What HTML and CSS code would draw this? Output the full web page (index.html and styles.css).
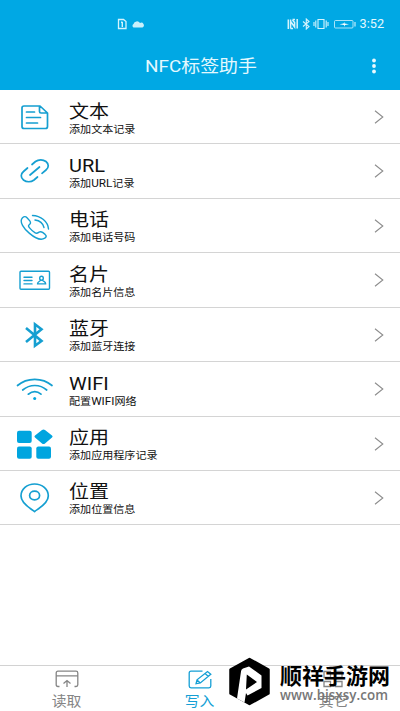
FILE: index.html
```html
<!DOCTYPE html>
<html lang="zh-CN">
<head>
<meta charset="utf-8">
<title>NFC标签助手</title>
<link rel="stylesheet" href="styles.css">
</head>
<body>
<div class="app">
  <header class="header">
    <div class="status">
      <svg class="status-left" width="28" height="12" viewBox="0 0 28 12"><path d="M1.500 1.500h5l2.500 2v7h-7.500z" fill="none" stroke="#d5f4fd" stroke-width="1.300"/><path d="M5.300 4v5M4 4.300h1.500" stroke="#d5f4fd" stroke-width="1.400"/><path d="M16.500 9.500a2 2 0 0 1 0-3.500a3.600 3.600 0 0 1 6.500-1a2.300 2.300 0 0 1 2.500 4.500z" fill="#c9f0fb"/></svg>
      <svg class="status-right" width="70" height="12" viewBox="0 0 70 12"><g fill="none" stroke="#d5f4fd" stroke-width="1.100"><path d="M1.300 1.500v9.500M3.600 1.500v9M3.600 3.500l4 5.500V4.500L5.500 2M5.500 1.500h2.500M3.500 10.500h2.500M10.200 1v9.500" stroke-width="1.500"/><path d="M16 3.500l6 5-2.700 2.500V1L22 3.500l-6 5"/><path d="M31 1.500h6v9h-6zM28.800 2.500v7M39.200 2.500v7M27 4v4M41 4v4"/><rect x="47.500" y="2.500" width="18.500" height="7.500" rx="1" stroke-width=".8"/><path d="M68 4v4.500"/></g><path d="M52.500 6.300l4-.8 1-1.500v1.500l4.500.7-4 .8-1 1.700V7z" fill="#fff"/></svg>
      <span class="time">3:52</span>
    </div>
    <div class="bar">
      <h1>NFC标签助手</h1>
      <svg class="more" width="6" height="16" viewBox="0 0 6 16" fill="#e9f9fe"><circle cx="3" cy="2.500" r="1.900"/><circle cx="3" cy="8" r="1.900"/><circle cx="3" cy="13.500" r="1.900"/></svg>
    </div>
  </header>
  <main class="list">
    <div class="row">
      <svg class="icon" viewBox="0 0 60 54"><path d="M24 16h16l7.500 7v13.500a2 2 0 0 1-2 2H24a2 2 0 0 1-2-2V18a2 2 0 0 1 2-2zM39.500 16v5.500q0 1.500 1.500 1.500h6.500M26.500 22h8M26.500 27.500h14M26.500 33h11"/></svg>
      <div class="text"><div class="name">文本</div><div class="sub">添加文本记录</div></div>
      <svg class="arrow" viewBox="0 0 10 14"><path d="M1 .7l7.800 6.300L1 13.300"/></svg>
    </div>
    <div class="row">
      <svg class="icon" viewBox="0 0 60 54"><path d="M32 20.500l3.500-3c3-2.300 7.500-2.300 10.500 0c3 2.500 3 6 0 8.500L42 29.300M27.500 24l-4 3.500c-3 2.500-3 6 0 8.500c3 2.300 7.500 2.300 10.500 0l3.500-3M30 31l9.500-8"/></svg>
      <div class="text"><div class="name">URL</div><div class="sub">添加<span class="latin">URL</span>记录</div></div>
      <svg class="arrow" viewBox="0 0 10 14"><path d="M1 .7l7.800 6.300L1 13.300"/></svg>
    </div>
    <div class="row">
      <svg class="icon thin" viewBox="0 0 60 54"><path d="M22.500 18.800c1.600-1.500 3.200-1.500 4.500-.1l2.800 3.200c1.200 1.600.8 2.800-.6 3.800-1.300 1-.7 2 .8 3.700 1.600 1.900 3.300 3.400 5.200 4.500 1.600 1 2.500.2 3.700-.7 1.200-.8 2.500-.6 3.700.2l2.500 2c1.700 1.500 1.300 2.700-.3 3.800-4 2.600-9.600 0-15.300-4.800-5.500-4.600-10.800-11.700-7-15.600zM32.500 16.500c8.200.2 15.500 6.200 16 13.500M35 21c4.800.6 8 3.500 9 7.500"/></svg>
      <div class="text"><div class="name">电话</div><div class="sub">添加电话号码</div></div>
      <svg class="arrow" viewBox="0 0 10 14"><path d="M1 .7l7.800 6.300L1 13.300"/></svg>
    </div>
    <div class="row">
      <svg class="icon thin" viewBox="0 0 60 54"><rect x="20" y="18.300" width="29.500" height="18" rx="1"/><path d="M24 24.300h8M24 27.500h8M24 30.900h8"/><ellipse cx="41.500" cy="25.200" rx="1.800" ry="2"/><path d="M40.500 27.200c0 1.200-3 1-3 3.700h8.200c0-2.700-3.200-2.500-3.200-3.700"/></svg>
      <div class="text"><div class="name">名片</div><div class="sub">添加名片信息</div></div>
      <svg class="arrow" viewBox="0 0 10 14"><path d="M1 .7l7.800 6.300L1 13.300"/></svg>
    </div>
    <div class="row">
      <svg class="icon bold" viewBox="0 0 60 54"><path d="M26 20l15.500 13-6.500 4.700V16.300l6.500 5L26 34"/></svg>
      <div class="text"><div class="name">蓝牙</div><div class="sub">添加蓝牙连接</div></div>
      <svg class="arrow" viewBox="0 0 10 14"><path d="M1 .7l7.800 6.300L1 13.300"/></svg>
    </div>
    <div class="row">
      <svg class="icon" viewBox="0 0 60 54"><path d="M17.500 23.500c9.500-8.300 25-8.300 34.500 0M22.700 28c7-6 17.300-6 24 0M28.300 32.200c4-3 9-3 12.700 0"/><circle class="fill" cx="34.700" cy="36.500" r="1.500"/></svg>
      <div class="text"><div class="name">WIFI</div><div class="sub">配置<span class="latin">WIFI</span>网络</div></div>
      <svg class="arrow" viewBox="0 0 10 14"><path d="M1 .7l7.800 6.300L1 13.300"/></svg>
    </div>
    <div class="row">
      <svg class="icon" viewBox="0 0 60 54"><g class="fill"><rect x="17" y="13.800" width="14.700" height="12.200" rx="2"/><rect x="17" y="29.600" width="14.700" height="12.200" rx="2"/><rect x="36.300" y="29.600" width="14.700" height="12.200" rx="2"/><path d="M42 13q1.500-1.100 3 0l7 5.500q1.300 1 0 2L45 26.400q-1.500 1.100-3 0l-7-5.900q-1.200-1 0-2z"/></g></svg>
      <div class="text"><div class="name">应用</div><div class="sub">添加应用程序记录</div></div>
      <svg class="arrow" viewBox="0 0 10 14"><path d="M1 .7l7.800 6.300L1 13.300"/></svg>
    </div>
    <div class="row">
      <svg class="icon" viewBox="0 0 60 54"><path d="M34.600 40.500c-3-2.500-13.600-7.500-13.600-15.500 0-6.800 6-12 13.600-12s13.700 5.200 13.700 12c0 8-10.700 13-13.700 15.500z"/><ellipse cx="34.600" cy="24.500" rx="5" ry="4.300"/></svg>
      <div class="text"><div class="name">位置</div><div class="sub">添加位置信息</div></div>
      <svg class="arrow" viewBox="0 0 10 14"><path d="M1 .7l7.800 6.300L1 13.300"/></svg>
    </div>
  </main>
  <nav class="tabs">
    <div class="tab"><svg width="26" height="20" viewBox="0 0 26 20"><path d="M5.500 16.500H4q-1.800 0-1.800-1.800V3q0-1.800 1.800-1.800h18q1.800 0 1.800 1.800v11.700q0 1.800-1.800 1.800h-1.500M2.200 5.800h21.600M13 17v-6.500M9.500 13.500l3.500-3 3.500 3"/></svg><span>读取</span></div>
    <div class="tab active"><svg width="26" height="20" viewBox="0 0 26 20"><path d="M15.500 1.200H4q-1.800 0-1.800 1.800v13q0 1.800 1.800 1.800h18q1.800 0 1.800-1.800V9M9 13.800l1-4L20.500 1.500l3.300 2.700L13.300 13zM18 3.500l3.200 2.700M10 10l3 2.800"/></svg><span>写入</span></div>
    <div class="tab"><svg width="26" height="20" viewBox="0 0 26 20"><path d="M4 1.500h6.500v6H4zM15.500 1.500H22v6h-6.500zM4 11.500h6.500v5H4zM15.500 11.500H22v5h-6.500z"/></svg><span>其它</span></div>
  </nav>
  <div class="watermark">
    <svg class="logo" width="42" height="50" viewBox="0 0 42 50"><path d="M20.500 2L39.500 12.500v24L20.500 47 1.500 36.500v-24z" stroke="#000" stroke-linejoin="round" stroke-width="2.500"/><path d="M12 14.500q0-2 2-3L20 9.500l12.500 9v12.500L18.500 38.500 17 36l-1.500 9.500L8 41.500zM17.800 17.500l-.8 15 11-7.500z" fill="#fff" fill-rule="evenodd"/></svg>
    <div class="brand"><div class="brand-name">顺祥手游网</div><div class="brand-url">www.bjsxsy.com</div></div>
  </div>
</div>
</body>
</html>
```
FILE: styles.css
```css
* { box-sizing: border-box; }
body { margin: 0; background: #fff; font-family: Roboto, "Noto Sans CJK SC", sans-serif; }
.app { position: relative; width: 400px; height: 711px; display: flex; flex-direction: column; overflow: hidden; }
.header { height: 90px; background: #00a8e4; color: #e4f8fe; flex: none; }
.status { height: 42px; display: flex; align-items: center; padding: 6px 16px 0 117px; }
.status-right { margin-left: 142px; }
.time { margin-left: auto; font-size: 12px; line-height: 14px; transform: scaleX(1.06); transform-origin: right; }
.bar { display: flex; align-items: center; height: 46px; padding: 1px 23px 0 145px; }
h1 { margin: 0; font-size: 16.6px; line-height: 24px; font-weight: 400; white-space: nowrap; transform: scaleX(1.14); transform-origin: left; padding-top: 2px; }
.more { margin-left: auto; }
.list { height: 435.4px; flex: none; display: grid; grid-template-rows: repeat(8, minmax(0, 1fr)); }
.row { display: flex; align-items: flex-start; border-bottom: 1px solid #d4d4d4; }
.icon { width: 60px; height: 54px; flex: none; fill: none; stroke: #159fd1; stroke-width: 1.7; stroke-linecap: round; stroke-linejoin: round; }
.thin { stroke-width: 1.4; }
.bold { stroke-width: 2.6; stroke-linejoin: miter; stroke-linecap: butt; }
.fill { fill: #00a5df; stroke: none; }
.text { flex: 1; padding: 10.5px 0 0 9px; color: #111; white-space: nowrap; }
.name { font-size: 17.7px; line-height: 22px; transform: scaleX(1.13); transform-origin: left; }
.sub { font-size: 9.8px; line-height: 12px; margin-top: 1px; transform: scaleX(1.13); transform-origin: left; }
.latin { font-size: 10.4px; }
.arrow { width: 10px; height: 14px; margin: 20px 16px 0 0; fill: none; stroke: #8d8d8d; stroke-width: 1.1; }
.tabs { margin-top: auto; height: 46px; border-top: 1px solid #d2d2d2; display: grid; grid-template-columns: repeat(3, 1fr); }
.tab { display: flex; flex-direction: column; align-items: center; padding-top: 4px; color: #858585; }
.tab svg { fill: none; stroke: currentColor; stroke-width: 1.3; flex: none; }
.tab span { font-size: 13.5px; line-height: 20px; transform: scaleX(1.1); margin-top: 1px; }
.active { color: #159fd5; }
.watermark { position: absolute; left: 229px; top: 657px; display: flex; }
.logo { flex: none; }
.brand { margin-left: 9px; white-space: nowrap; }
.brand-name { font-family: "Noto Sans CJK SC", sans-serif; font-size: 22px; line-height: 26px; font-weight: 700; color: #000; margin-top: 4px; }
.brand-url { font-family: "Open Sans", sans-serif; font-size: 13.4px; line-height: 15px; color: #777; font-weight: 600; letter-spacing: .05px; margin-top: 1px; }
```
